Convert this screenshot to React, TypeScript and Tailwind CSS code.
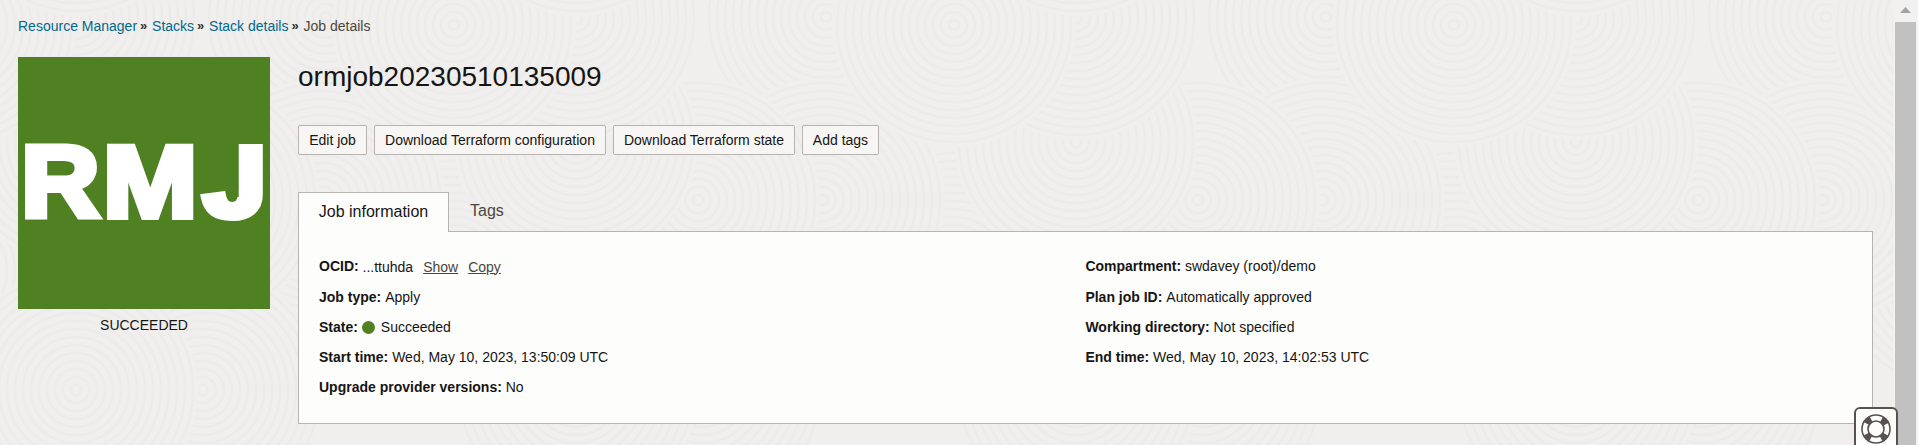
import type { ReactNode } from "react";

const RINGS = Array.from({ length: 15 }, (_, i) => 5 + i * 8);

const SWIRLS: [number, number, number][] = [
  [176, 270, 122],
  [54, 270, 122],
  [554, 270, 122],
  [426, 17, 122],
  [423, 200, 122],
  [-77, 200, 122],
  [298, 200, 122],
  [303, 390, 122],
  [176, 390, 122],
  [-197, 390, 122],
  [176, 142, 122],
  [177, 18, 122],
  [54, 25, 122],
  [554, 25, 122],
  [177, -106, 122],
];

function Texture() {
  return (
    <svg className="absolute inset-0 h-full w-full" aria-hidden="true">
      <defs>
        <pattern id="swirls" x="400" y="0" width="500" height="500" patternUnits="userSpaceOnUse">
          <rect width="500" height="500" fill="#f0efed" />
          {SWIRLS.map(([x, y, r]) => (
            <g key={`${x}-${y}`} fill="none" stroke="#ecebe9" strokeWidth="2.4">
              <circle cx={x} cy={y} r={r} fill="#f0efed" stroke="none" />
              {RINGS.map((ring) => (
                <circle key={ring} cx={x} cy={y} r={ring} />
              ))}
            </g>
          ))}
        </pattern>
      </defs>
      <rect width="100%" height="100%" fill="url(#swirls)" />
    </svg>
  );
}

function Crumb({ children }: { children: ReactNode }) {
  return (
    <>
      <a className="text-[#00688c]">{children}</a>
      <span className="mr-[5px] ml-[3px] w-[7px] text-[13px] font-bold text-[#312d2a]">»</span>
    </>
  );
}

function Field({ label, children }: { label: string; children: ReactNode }) {
  return (
    <div className="flex h-[30px] items-center whitespace-pre first:-mt-px first:mb-px">
      <span className="font-bold">{label}: </span>
      {children}
    </div>
  );
}

const ACTIONS = [
  { label: "Edit job", width: "w-[69px]" },
  { label: "Download Terraform configuration", width: "w-[232px]" },
  { label: "Download Terraform state", width: "w-[182px]" },
  { label: "Add tags", width: "w-[77px]" },
];

function LifeRing() {
  return (
    <svg width="30" height="30" viewBox="0 0 30 30" fill="none" stroke="#57524f">
      <circle cx="15" cy="15" r="11" strokeWidth="7" strokeDasharray="6.4 10.88" strokeDashoffset="-5.44" />
      <circle cx="15" cy="15" r="14" strokeWidth="1.6" />
      <circle cx="15" cy="15" r="8" strokeWidth="1.6" />
    </svg>
  );
}

function Monogram() {
  return (
    <svg
      width="252"
      height="252"
      viewBox="0 0 252 252"
      className="fill-white stroke-white font-['Liberation_Sans',Arial,sans-serif] text-[102px] font-bold"
      strokeWidth="6"
    >
      <text transform="translate(2.9 160) scale(1.068 1)">R</text>
      <text transform="translate(84.8 160) scale(1.115 1)">M</text>
      <text className="text-[99px]" strokeWidth="8" transform="translate(185.8 159) scale(1.129 1)">
        J
      </text>
      <rect x="196" y="84" width="24.7" height="46" fill="#4f8122" stroke="none" />
      <rect x="210" y="129" width="10.7" height="11" fill="#4f8122" stroke="none" />
    </svg>
  );
}

export default function App() {
  return (
    <div className="relative flex h-[445px] w-full overflow-hidden bg-[#f0efed] font-['Liberation_Sans',Arial,sans-serif] text-[14px] leading-[20px] text-[#161513]">
      <Texture />
      <div className="relative flex-1 pl-[18px]">
        <nav className="flex h-[57px] items-start pt-[16px]">
          <Crumb>Resource Manager</Crumb>
          <Crumb>Stacks</Crumb>
          <Crumb>Stack details</Crumb>
          <span className="text-[#4a4541]">Job details</span>
        </nav>
        <div className="flex">
          <aside className="w-[252px] shrink-0 text-center">
            <div className="h-[252px] bg-[#4f8122]">
              <Monogram />
            </div>
            <div className="mt-[6px]">SUCCEEDED</div>
          </aside>
          <main className="ml-[28px] w-[1575px] shrink-0">
            <h1 className="h-[68px] pt-px text-[28px] leading-[38px]">ormjob20230510135009</h1>
            <div className="flex gap-[7px]">
              {ACTIONS.map((action) => (
                <button
                  key={action.label}
                  className={`h-[30px] rounded-[2px] border border-[#b7b3ae] bg-[#f7f6f4] whitespace-nowrap ${action.width}`}
                >
                  {action.label}
                </button>
              ))}
            </div>
            <div className="relative z-10 mt-[37px] flex h-[40px] text-[16px]">
              <div className="w-[151px] border border-b-0 border-[#b7b3ae] bg-[#fdfdfc] pt-[9px] text-center">
                Job information
              </div>
              <div className="pt-[9px] pl-[21px] text-[#4a4541]">Tags</div>
            </div>
            <section className="-mt-px flex h-[193px] border border-[#b7b3ae] bg-[#fdfdfc] pt-[20px] pl-[20px]">
              <div className="w-[766.4px]">
                <Field label="OCID">
                  <span className="pt-px">...ttuhda</span>
                  <a className="ml-[10px] pt-px text-[#4a4541] underline">Show</a>
                  <a className="ml-[10px] pt-px text-[#4a4541] underline">Copy</a>
                </Field>
                <Field label="Job type">Apply</Field>
                <Field label="State">
                  <span className="mr-[6px] size-[13px] rounded-full bg-[#4f8122]" />
                  Succeeded
                </Field>
                <Field label="Start time">Wed, May 10, 2023, 13:50:09 UTC</Field>
                <Field label="Upgrade provider versions">No</Field>
              </div>
              <div>
                <Field label="Compartment">swdavey (root)/demo</Field>
                <Field label="Plan job ID">Automatically approved</Field>
                <Field label="Working directory">Not specified</Field>
                <Field label="End time">Wed, May 10, 2023, 14:02:53 UTC</Field>
              </div>
            </section>
          </main>
        </div>
      </div>
      <div className="relative flex w-[25px] flex-col items-center bg-[#f1f1f1]">
        <svg className="h-[22px] w-[21px]" viewBox="0 0 21 22">
          <path d="M5 13 L10.5 7 L16 13 Z" fill="#a3a3a3" />
        </svg>
        <div className="w-[21px] flex-1 bg-[#c1c1c1]" />
      </div>
      <button className="absolute top-[407px] left-[1854px] flex h-[50px] w-[44px] justify-center rounded-[6px] border-2 border-[#57524f] bg-[#fdfdfc] pt-[5px]">
        <LifeRing />
      </button>
    </div>
  );
}
